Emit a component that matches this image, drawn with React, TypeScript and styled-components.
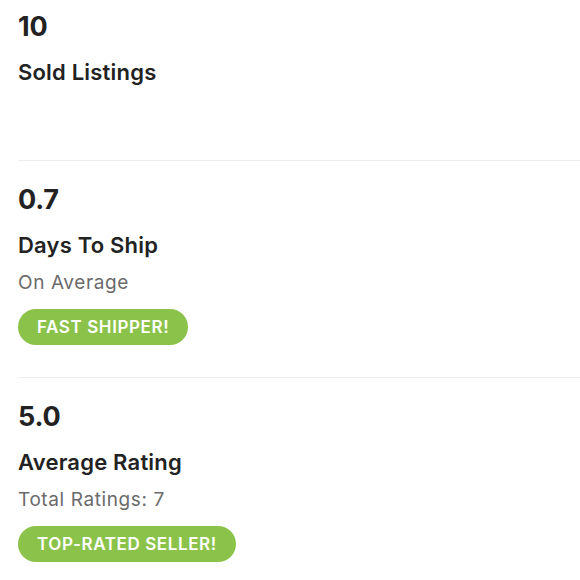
import styled, { createGlobalStyle } from 'styled-components';

const GlobalStyle = createGlobalStyle`
  html, body {
    margin: 0;
    padding: 0;
    background: #ffffff;
  }
  body {
    font-family: Inter, Lato, "Liberation Sans", sans-serif;
    color: #222222;
    -webkit-font-smoothing: antialiased;
  }
`;

const StatsList = styled.div`
  display: flex;
  flex-direction: column;
  padding-left: 18px;
  width: 580px;
  box-sizing: border-box;
`;

const StatSection = styled.section<{ $hasBadge: boolean }>`
  display: flex;
  flex-direction: column;
  align-items: flex-start;
  padding: 22px 0 ${({ $hasBadge }) => ($hasBadge ? '32px' : '38px')};
  border-bottom: 1px solid #ededed;

  &:first-child {
    padding-top: 10px;
  }

  &:last-child {
    border-bottom: none;
  }
`;

const StatValue = styled.div`
  font-size: 27px;
  line-height: 34px;
  font-weight: 700;
  letter-spacing: -0.2px;
  color: #222222;
`;

const StatLabel = styled.div`
  margin-top: 14px;
  font-size: 22px;
  line-height: 28px;
  font-weight: 600;
  letter-spacing: 0.2px;
  color: #222222;
`;

const StatNote = styled.div`
  margin-top: 12px;
  font-size: 19px;
  line-height: 24px;
  font-weight: 400;
  letter-spacing: 0.6px;
  color: #6b6b6b;
  min-height: 24px;
`;

const Badge = styled.span`
  margin-top: 14px;
  display: inline-flex;
  align-items: center;
  height: 36px;
  padding: 0 19px;
  border-radius: 18px;
  background: #8bc34a;
  color: #ffffff;
  font-size: 17px;
  font-weight: 600;
  letter-spacing: 0.6px;
  text-transform: uppercase;
`;

type Stat = {
  value: string;
  label: string;
  note?: string;
  badge?: string;
};

const stats: Stat[] = [
  { value: '10', label: 'Sold Listings' },
  { value: '0.7', label: 'Days To Ship', note: 'On Average', badge: 'Fast Shipper!' },
  { value: '5.0', label: 'Average Rating', note: 'Total Ratings: 7', badge: 'Top-Rated Seller!' },
];

export default function App() {
  return (
    <>
      <GlobalStyle />
      <StatsList>
        {stats.map((stat) => (
          <StatSection key={stat.label} $hasBadge={!!stat.badge}>
            <StatValue>{stat.value}</StatValue>
            <StatLabel>{stat.label}</StatLabel>
            <StatNote>{stat.note}</StatNote>
            {stat.badge && <Badge>{stat.badge}</Badge>}
          </StatSection>
        ))}
      </StatsList>
    </>
  );
}
